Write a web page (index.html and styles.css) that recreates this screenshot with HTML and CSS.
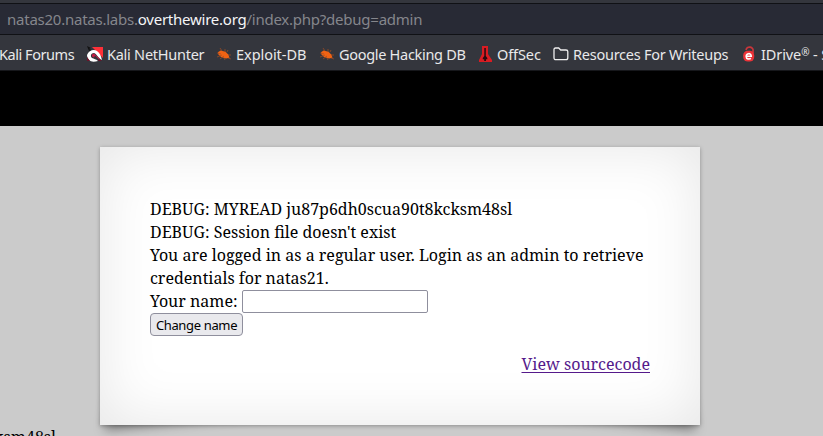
FILE: index.html
```html
<!DOCTYPE html>
<html lang="en">
<head>
<meta charset="utf-8">
<title>natas20</title>
<link rel="stylesheet" href="styles.css">
</head>
<body>
<header class="browser">
  <div class="url"><span class="sub">natas20.natas.labs.</span><span class="domain">overthewire.org</span><span class="path">/index.php?debug=admin</span></div>
  <nav class="bookmarks">
    <span class="mark forums">Kali Forums</span>
    <span class="mark hunter"><svg width="16" height="16" viewBox="0 0 16 16"><path d="M5 1h11v11z" fill="#ff3038"/><path d="M0 0l4 2-2 1 3 1-3 1z" fill="#111"/><path d="M0 9C2 4 7 3 10 5c3 2 4 5 5 9-4-2-5-6-8-7-3 0-4 3-2 5 2 1 4 1 6 3-4 1-7 1-9-1-1-1-2-3-2-5z" fill="#fff"/><path d="M5 8.5l2-1 7 6.500-2-.5-4-4-1 2-2-1z" fill="#c51c45"/><path d="M0 11l3 4H0zM12 13l3 2h-4z" fill="#6d1229"/></svg>Kali NetHunter</span>
    <span class="mark exploit"><svg width="16" height="16" viewBox="0 0 16 16"><use href="#bug"/></svg>Exploit-DB</span>
    <span class="mark google"><svg width="16" height="16" viewBox="0 0 16 16"><g id="bug"><path d="M2 6.200l2.500-1.700 5 1.200 3 3 1 3-3.500.8-5-1.500-2.500-2.500z" fill="#f26313"/><path d="M1 7l4 1M1 11l5-2M4 13l4-3M4 2l2 3M9 3v3M11 6l1-2M12 9l3 0M12 12l3 1M8 12l1 2" stroke="#a94d20" stroke-width=".7" fill="none"/></g></svg>Google Hacking DB</span>
    <span class="mark offsec"><svg width="16" height="16" viewBox="0 0 16 16"><path d="M4 0h6v8l4 6v2H1v-2l3-6z" fill="#d91c22"/><path d="M6.300 2h1.500v8l1.500 2v1.200H8V15H6.200v-1.800H4.800V12l1.500-2z" fill="#260b10"/></svg>OffSec</span>
    <span class="mark resources"><svg width="16" height="16" viewBox="0 0 16 16"><path d="M2.500 2h3.200l2 2H13Q14.800 4 14.800 5.500v6.200Q14.800 13.700 13 13.700H3Q1 13.700 1 11.700V3.500Q1 2 2.500 2z" fill="none" stroke="#eee" stroke-width="1.3"/></svg>Resources For Writeups</span>
    <span class="mark idrive"><svg width="16" height="16" viewBox="0 0 16 16"><path d="M5 4c1-5 8-3 7 1v2" fill="none" stroke="#c9363b" stroke-width="1.7"/><rect x="2.200" y="4.700" width="11" height="10.800" rx="4.500" fill="#eb3338"/><path d="M5.200 10.200h5c0-3.500-5-3.300-5 .2 0 3 3.200 3 4.700 2" fill="none" stroke="#fff" stroke-width="1.600"/></svg><span>IDrive<span class="reg">®</span> - S</span></span>
  </nav>
</header>
<div class="banner"></div>
<main class="page">
  <section class="content">
    <div class="line">DEBUG: MYREAD ju87p6dh0scua90t8kcksm48sl</div>
    <div class="line">DEBUG: Session file doesn't exist</div>
    <div class="line">You are logged in as a regular user. Login as an admin to retrieve</div>
    <div class="line">credentials for natas21.</div>
    <form>
      <label class="line field"><span class="caption">Your name:</span><input type="text"></label>
      <button type="button">Change name</button>
    </form>
    <div class="source"><a href="#">View sourcecode</a></div>
  </section>
  <div class="trailing">ju87p6dh0scua90t8kcksm48sl</div>
</main>
</body>
</html>
```
FILE: styles.css
```css
* { box-sizing: border-box; }
html { overflow: hidden; }
body { margin: 0; height: 436px; overflow: hidden; background: #cbcbcb; color: #000; font: 16px/23px "Noto Serif", "DejaVu Serif Condensed", "DejaVu Serif", serif; }
.browser { height: 71px; background: #34363d; border-bottom: 1px solid #16171b; padding-top: 3px; font-family: "Noto Sans", sans-serif; }
.url { height: 32px; background: #282a35; border: solid #101115; border-width: 1px 0; padding-left: 7px; font-size: 15px; letter-spacing: -.24px; line-height: 31px; color: #85868c; white-space: nowrap; }
.domain { color: #f5f5f7; }
.bookmarks { height: 35px; display: flex; align-items: center; padding-top: 4px; white-space: nowrap; color: #e9e9ea; font-size: 14.5px; line-height: 20px; letter-spacing: -.25px; }
.mark { display: flex; align-items: center; gap: 4px; flex: none; height: 22px; padding-bottom: 2px; }
.mark svg { margin-top: 1px; }
.forums { width: 88px; margin-left: -1px; letter-spacing: -.45px; }
.hunter { width: 129px; }
.exploit { width: 103px; letter-spacing: -.05px; }
.google { width: 159px; letter-spacing: -.3px; }
.offsec { width: 75px; gap: 3px; letter-spacing: -.1px; }
.resources { width: 188px; }
.idrive { letter-spacing: -.1px; }
.reg { font-size: 10px; vertical-align: 4px; line-height: 1; }
.banner { height: 55px; background: #000; }
.page { position: relative; z-index: 0; padding-top: 21px; }
.content { position: relative; width: 600px; height: 278px; margin-left: 100px; padding: 51px 50px 49px; background: #fff; box-shadow: 0 1px 4px rgba(0,0,0,.3), 0 0 60px rgba(0,0,0,.1) inset; }
.content::before, .content::after { content: ""; position: absolute; z-index: -2; bottom: 13px; left: 12px; width: 200px; height: 50px; box-shadow: 0 8px 12px rgba(0,0,0,.4); transform: skew(-15deg) rotate(-6deg); }
.content::after { left: auto; right: 12px; transform: skew(15deg) rotate(6deg); }
.line { height: 23px; white-space: nowrap; }
.field { display: flex; align-items: center; }
.caption { width: 92px; }
input { width: 186px; height: 23px; margin: 0; border: 1px solid #8f8f9d; border-radius: 2px; background: #fff; }
form { height: 47px; }
button { display: block; width: 93px; height: 23px; margin: 0; padding: 1px 0 0; border: 1px solid #8f8f9d; border-radius: 4px; background: #e9e9ed; color: #000; font: 13px/20px "Noto Sans", sans-serif; letter-spacing: -.35px; white-space: nowrap; }
.source { margin-top: 16px; text-align: right; height: 23px; }
a { color: #551a8b; text-underline-offset: 2px; }
.trailing { width: 56px; padding-top: 1px; direction: rtl; white-space: nowrap; }
```
